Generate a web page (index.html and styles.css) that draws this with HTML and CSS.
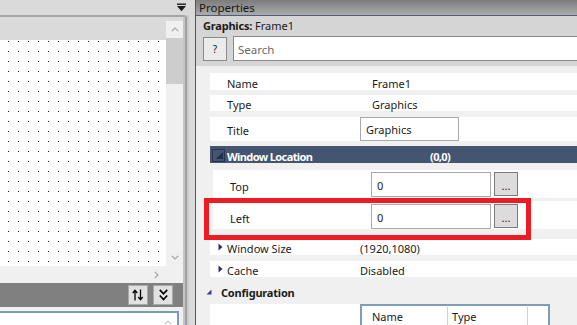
FILE: index.html
```html
<!DOCTYPE html>
<html lang="en">
<head>
    <meta charset="UTF-8" />
    <title>Properties</title>
    <link rel="stylesheet" href="styles.css">
</head>
<body>
    <div class="left">
        <div class="dock-title">
            <svg class="dock-menu" width="9" height="9" viewBox="0 0 9 9"><rect x="0" y="0.5" width="9" height="1.4" fill="#1a1a1a"/><path d="M0 3H9L4.5 8.2Z" fill="#1a1a1a"/></svg>
        </div>
        <div class="dock-body">
            <div class="main">
                <div class="doc">
                    <div class="canvas-col">
                        <div class="ruler"></div>
                        <div class="canvas"></div>
                        <div class="hscroll">
                            <svg width="5" height="8" viewBox="0 0 5 8"><polyline points="0.8,0.8 4,4 0.8,7.2" fill="none" stroke="#a4a4a4" stroke-width="1.2"/></svg>
                        </div>
                    </div>
                    <div class="vscroll">
                        <div class="sb-btn">
                            <svg width="8" height="5" viewBox="0 0 8 5"><polyline points="0.8,4.2 4,1 7.2,4.2" fill="none" stroke="#a4a4a4" stroke-width="1.2"/></svg>
                        </div>
                        <div class="thumb"></div>
                        <div class="track"></div>
                        <div class="sb-btn">
                            <svg width="8" height="5" viewBox="0 0 8 5"><polyline points="0.8,0.8 4,4 7.2,0.8" fill="none" stroke="#a4a4a4" stroke-width="1.2"/></svg>
                        </div>
                        <div class="corner"></div>
                    </div>
                </div>
                <div class="toolbar">
                    <div class="tb-btn">
                        <svg width="12" height="12" viewBox="0 0 12 12"><path d="M3 11.5V1.5M0.8 4L3 1.2L5.2 4" fill="none" stroke="#000" stroke-width="1.3"/><path d="M8.5 0.5V10.5M6.3 8L8.5 10.8L10.7 8" fill="none" stroke="#000" stroke-width="1.3"/></svg>
                    </div>
                    <div class="tb-btn">
                        <svg width="9" height="12" viewBox="0 0 9 12"><polyline points="0.8,0.8 4.5,4.8 8.2,0.8" fill="none" stroke="#000" stroke-width="1.7"/><polyline points="0.8,6.5 4.5,10.5 8.2,6.5" fill="none" stroke="#000" stroke-width="1.7"/></svg>
                    </div>
                </div>
                <div class="lower">
                    <div class="lower-box">
                        <svg width="8" height="5" viewBox="0 0 8 5"><polyline points="0.8,4.2 4,1 7.2,4.2" fill="none" stroke="#c8c8c8" stroke-width="1.2"/></svg>
                    </div>
                </div>
            </div>
            <div class="edge"></div>
            <div class="split"></div>
        </div>
    </div>

    <div class="props">
        <div class="p-title">Properties</div>
        <div class="p-head"><b>Graphics:</b> Frame1</div>
        <div class="p-search">
            <div class="help">?</div>
            <input class="search" type="text" placeholder="Search">
        </div>
        <div class="grid">
            <div class="row r-name"><span class="k">Name</span><span class="v pad">Frame1</span></div>
            <div class="row r-type"><span class="k">Type</span><span class="v pad">Graphics</span></div>
            <div class="row r-title"><span class="k">Title</span><input class="field title-field" type="text" value="Graphics"></div>
            <div class="row group">
                <svg class="focus" width="13" height="13" viewBox="0 0 13 13"><rect x="0.5" y="0.5" width="12" height="12" fill="none" stroke="#10182a" stroke-width="1" stroke-dasharray="1 1"/><path d="M11 3V10H4Z" fill="#1f2c55"/></svg>
                <span class="k">Window Location</span><span class="v">(0,0)</span>
            </div>
            <div class="row sub r-top">
                <span class="k">Top</span>
                <input class="field" type="text" value="0">
                <div class="dots">...</div>
            </div>
            <div class="row sub r-left">
                <span class="k">Left</span>
                <input class="field" type="text" value="0">
                <div class="dots">...</div>
            </div>
            <div class="row r-size">
                <svg class="arrow" width="5" height="8" viewBox="0 0 5 8"><path d="M0.5 0.5L4.5 4L0.5 7.5Z" fill="#2a2a7c"/></svg>
                <span class="k">Window Size</span><span class="v">(1920,1080)</span>
            </div>
            <div class="row r-cache">
                <svg class="arrow" width="5" height="8" viewBox="0 0 5 8"><path d="M0.5 0.5L4.5 4L0.5 7.5Z" fill="#2a2a7c"/></svg>
                <span class="k">Cache</span><span class="v">Disabled</span>
            </div>
            <div class="cfg">
                <svg width="6" height="6" viewBox="0 0 6 6"><path d="M5.5 0.5V5.5H0.5Z" fill="#3f3f86"/></svg>
                <span>Configuration</span>
            </div>
            <div class="cfg-body">
                <div class="cfg-fill"></div>
                <div class="table">
                    <div class="th th-name">Name</div>
                    <div class="th th-type">Type</div>
                    <div class="th th-end"></div>
                </div>
            </div>
        </div>
        <div class="highlight"></div>
    </div>
</body>
</html>
```

FILE: styles.css
```css
body {
    margin: 0;
    width: 577px;
    height: 325px;
    overflow: hidden;
    display: flex;
    font-family: "Noto Sans", "Open Sans", sans-serif;
    font-size: 11px;
    color: #1b1b1b;
    background-color: #dadada;
}

/* left dock */
.left {
    width: 195px;
    flex-shrink: 0;
    display: flex;
    flex-direction: column;
    background-color: #dadada;
}
.dock-title {
    height: 15px;
    display: flex;
    justify-content: flex-end;
    align-items: flex-start;
    padding-right: 9px;
}
.dock-menu {
    margin-top: 3px;
}
.dock-body {
    flex-grow: 1;
    display: flex;
}
.main {
    width: 183px;
    display: flex;
    flex-direction: column;
    border-top: 2px solid #a6a6a6;
}
.edge {
    width: 2px;
    background-color: #c6c6c6;
    border-top: 2px solid #a6a6a6;
    border-right: 2px solid #a0a0a0;
    border-top-right-radius: 3px;
}
.split {
    flex-grow: 1;
    background: linear-gradient(to right, #cacaca 0 2px, #dadada 2px);
}
.doc {
    height: 266px;
    display: flex;
}
.canvas-col {
    width: 166px;
    display: flex;
    flex-direction: column;
}
.ruler {
    height: 23px;
    background-color: #dadada;
}
.canvas {
    height: 226px;
    background-color: #fff;
    background-image: radial-gradient(circle at 0.5px 0.5px, #1a1a1a 0.75px, transparent 0.9px);
    background-size: 10px 10px;
    background-position: 8px 1px;
}
.hscroll {
    flex-grow: 1;
    background-color: #f0f0f0;
    display: flex;
    justify-content: flex-end;
    align-items: center;
    padding-right: 7px;
}
.vscroll {
    width: 17px;
    display: flex;
    flex-direction: column;
    background-color: #f0f0f0;
    border-top: 4px solid #dadada;
}
.sb-btn {
    height: 17px;
    display: flex;
    justify-content: center;
    align-items: center;
}
.thumb {
    height: 46px;
    background-color: #cdcdcd;
}
.track {
    flex-grow: 1;
}
.corner {
    height: 17px;
}
.toolbar {
    height: 24px;
    background-color: #808080;
    display: flex;
    justify-content: flex-end;
    align-items: flex-start;
    gap: 5px;
    padding: 2px 10px 0 0;
    box-sizing: border-box;
}
.tb-btn {
    width: 20px;
    height: 20px;
    box-sizing: border-box;
    background-color: #e1e1e1;
    border: 1px solid #a9a9a9;
    display: flex;
    justify-content: center;
    align-items: center;
}
.lower {
    flex-grow: 1;
    background-color: #f0f0f0;
    padding: 4px 4px 0 0;
}
.lower-box {
    height: 100%;
    background-color: #fff;
    border-top: 2px solid #7f9bb8;
    border-right: 2px solid #7f9bb8;
    display: flex;
    justify-content: flex-end;
    align-items: flex-start;
    padding: 7px 5px 0 0;
    box-sizing: border-box;
}

/* properties */
.props {
    flex-grow: 1;
    position: relative;
    border-left: 1px solid #45587a;
    display: flex;
    flex-direction: column;
    background-color: #d5d5d5;
}
.p-title {
    height: 15px;
    line-height: 15px;
    padding-left: 3px;
    border-bottom: 1px solid #4f5e74;
    background: linear-gradient(#7c7c7c, #ababab);
    font-size: 11.5px;
    color: #151515;
}
.p-head {
    height: 22px;
    line-height: 20px;
    padding-left: 7px;
}
.p-head b {
    letter-spacing: -0.2px;
}
.p-search {
    display: flex;
    align-items: flex-start;
    gap: 6px;
    padding: 0 0 5px 7px;
}
.help {
    width: 24px;
    height: 24px;
    margin-top: 1px;
    box-sizing: border-box;
    border: 1px solid #8a8a8a;
    background-color: #ebebeb;
    display: flex;
    justify-content: center;
    align-items: center;
    font-size: 10px;
}
.search {
    flex-grow: 1;
    height: 25px;
    box-sizing: border-box;
    border: 1px solid #8a8a8a;
    border-right: none;
    margin: 0;
    padding: 2px 0 0 4px;
    font-family: inherit;
    font-size: 11.5px;
    outline: none;
}
.search::placeholder {
    color: #6a6a6a;
}
.grid {
    flex-grow: 1;
    background-color: #f0f0f0;
    padding: 7px 0 0 14px;
}
.row {
    display: flex;
    align-items: center;
    background-color: #fff;
}
.row .k,
.row .v {
    padding-top: 3px;
}
.row .k {
    width: 150px;
    padding-left: 17px;
    box-sizing: border-box;
    flex-shrink: 0;
}
.pad {
    padding-left: 12px;
}
.r-name {
    height: 17px;
    margin-bottom: 5px;
}
.r-type {
    height: 16px;
    margin-bottom: 6px;
}
.r-title {
    height: 24px;
    margin-bottom: 5px;
}
.field {
    height: 100%;
    box-sizing: border-box;
    margin: 0;
    border: 1px solid #a9a9a9;
    padding: 1px 0 0 5px;
    font-family: inherit;
    font-size: 11px;
    color: #1b1b1b;
    background-color: #fff;
    outline: none;
}
.title-field {
    width: 99px;
}
.group {
    height: 17px;
    margin-bottom: 7px;
    background-color: #44556f;
    color: #fff;
    font-weight: bold;
    font-size: 11px;
    letter-spacing: -0.6px;
    position: relative;
}
.group .focus {
    position: absolute;
    left: 2px;
    top: 3px;
}
.group .k {
    width: 220px;
}
.sub {
    margin-left: 3px;
    height: 28px;
    align-items: flex-start;
}
.sub .k {
    width: 158px;
    align-self: center;
}
.sub .field {
    width: 120px;
    height: 25px;
}
.r-top {
    padding-top: 2px;
    height: 26px;
    margin-bottom: 3px;
}
.r-left {
    padding-top: 3px;
    height: 25px;
    margin-bottom: 10px;
}
.dots {
    width: 24px;
    height: 24px;
    margin-left: 3px;
    box-sizing: border-box;
    border: 1px solid #7c7c7c;
    background-color: #dcdcdc;
    display: flex;
    justify-content: center;
    align-items: flex-end;
    padding-bottom: 5px;
    line-height: 8px;
    font-size: 11px;
}
.r-size,
.r-cache {
    height: 16px;
    position: relative;
}
.r-size {
    margin-bottom: 6px;
}
.arrow {
    position: absolute;
    left: 8px;
    top: 4px;
}
.cfg {
    height: 27px;
    margin-left: -4px;
    display: flex;
    align-items: center;
    gap: 9px;
    font-weight: bold;
    font-size: 11px;
    letter-spacing: -0.2px;
}
.cfg span {
    padding-top: 4px;
}
.cfg svg {
    margin-top: 2px;
}
.cfg-body {
    display: flex;
    height: 30px;
}
.cfg-fill {
    width: 150px;
    background-color: #fff;
}
.table {
    width: 190px;
    box-sizing: border-box;
    border: 2px solid #7f9db9;
    border-bottom: none;
    background-color: #fff;
    display: flex;
}
.th {
    height: 22px;
    margin-top: 1px;
    line-height: 20px;
    border-right: 1px solid #d0d0d0;
    box-sizing: border-box;
}
.th-name {
    width: 86px;
    padding-left: 10px;
}
.th-type {
    width: 80px;
    padding-left: 4px;
}
.th-end {
    flex-grow: 1;
    border-right: none;
}
.highlight {
    position: absolute;
    left: 8px;
    top: 198px;
    width: 327px;
    height: 42px;
    box-sizing: border-box;
    border: 5px solid #ed1c24;
}
```
